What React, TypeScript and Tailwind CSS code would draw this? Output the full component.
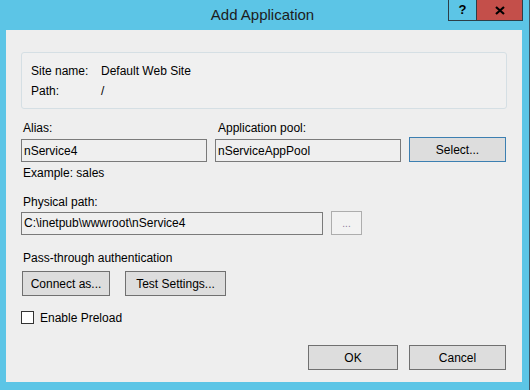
import React from "react";

const font = { fontFamily: '"Liberation Sans", Arial, sans-serif' };

function Btn({ w, children, blue }: { w: string; children: React.ReactNode; blue?: boolean }) {
  return (
    <div
      className={`${w} h-[25px] flex items-center justify-center bg-[#dddddd] border ${
        blue ? "border-[#3c7fb1]" : "border-[#707070]"
      } text-[12px] text-black`}
    >
      {children}
    </div>
  );
}

function Input({ w, value }: { w: string; value: string }) {
  return (
    <div className={`${w} h-[23px] flex items-center border border-[#7a7a7a] bg-[#efefef] pl-[2px] text-[12px] text-black`}>
      {value}
    </div>
  );
}

export default function App() {
  return (
    <div className="w-[530px] h-[390px] bg-[#5cc5e6] flex flex-col border-r border-[#3d5868]" style={font}>
      <div className="h-[30px] relative flex items-center justify-center">
        <span className="text-[15px] text-[#1c1c1c] pt-[1px] pr-[4px]">Add Application</span>
        <div className="absolute top-0 right-[6px] flex h-[21px] border border-t-0 border-[#2c3e48]">
          <div className="w-[28px] flex items-center justify-center text-[13px] font-bold text-black border-r border-[#2c3e48]">?</div>
          <div className="w-[45px] bg-[#c44f4a] flex items-center justify-center">
            <svg width="10" height="9" viewBox="0 0 10 9">
              <path d="M1 1 L9 8 M9 1 L1 8" stroke="#000" strokeWidth="2.2" />
            </svg>
          </div>
        </div>
      </div>
      <div className="ml-[6px] w-[516px] h-[352px] bg-[#eeeeee] flex flex-col pl-[15px] pr-[15px] pt-[22px] text-[12px] text-black">
        <div className="w-[486px] h-[57px] border border-[#d5dfe4] rounded-[3px] bg-[#f0f0f0] pl-[9px] pt-[10px] flex flex-col gap-[4px]">
          <div className="flex h-[16px] items-center">
            <span className="w-[70px]">Site name:</span>
            <span>Default Web Site</span>
          </div>
          <div className="flex h-[16px] items-center">
            <span className="w-[70px]">Path:</span>
            <span>/</span>
          </div>
        </div>

        <div className="flex gap-[8px] mt-[11px] items-end">
          <div className="flex flex-col">
            <span className="h-[16px] leading-[16px] pl-[2px] mb-[3px]">Alias:</span>
            <Input w="w-[186px]" value="nService4" />
          </div>
          <div className="flex flex-col">
            <span className="h-[16px] leading-[16px] pl-[3px] mb-[3px]">Application pool:</span>
            <Input w="w-[186px]" value="nServiceAppPool" />
          </div>
          <Btn w="w-[97px]" blue>
            Select...
          </Btn>
        </div>
        <span className="h-[16px] leading-[16px] mt-[3px] pl-[2px]">Example: sales</span>

        <span className="h-[16px] leading-[16px] mt-[13px] pl-[2px]">Physical path:</span>
        <div className="flex items-center gap-[8px] mt-[1px]">
          <Input w="w-[302px]" value="C:\inetpub\wwwroot\nService4" />
          <div className="w-[31px] h-[24px] border border-[#adadad] bg-[#f2f2f2] flex items-center justify-center text-[10px] text-[#8a7a9a]">
            ...
          </div>
        </div>

        <span className="h-[16px] leading-[16px] mt-[15px] pl-[2px]">Pass-through authentication</span>
        <div className="flex gap-[15px] mt-[5px] pl-[1px]">
          <Btn w="w-[88px]">Connect as...</Btn>
          <Btn w="w-[101px]">Test Settings...</Btn>
        </div>

        <div className="flex items-center mt-[15px] h-[13px]">
          <div className="w-[13px] h-[13px] border border-[#333333] bg-white" />
          <span className="ml-[6px]">Enable Preload</span>
        </div>

        <div className="flex justify-end gap-[11px] mt-[21px] pr-[1px]">
          <Btn w="w-[90px]">OK</Btn>
          <Btn w="w-[97px]">Cancel</Btn>
        </div>
      </div>
    </div>
  );
}
